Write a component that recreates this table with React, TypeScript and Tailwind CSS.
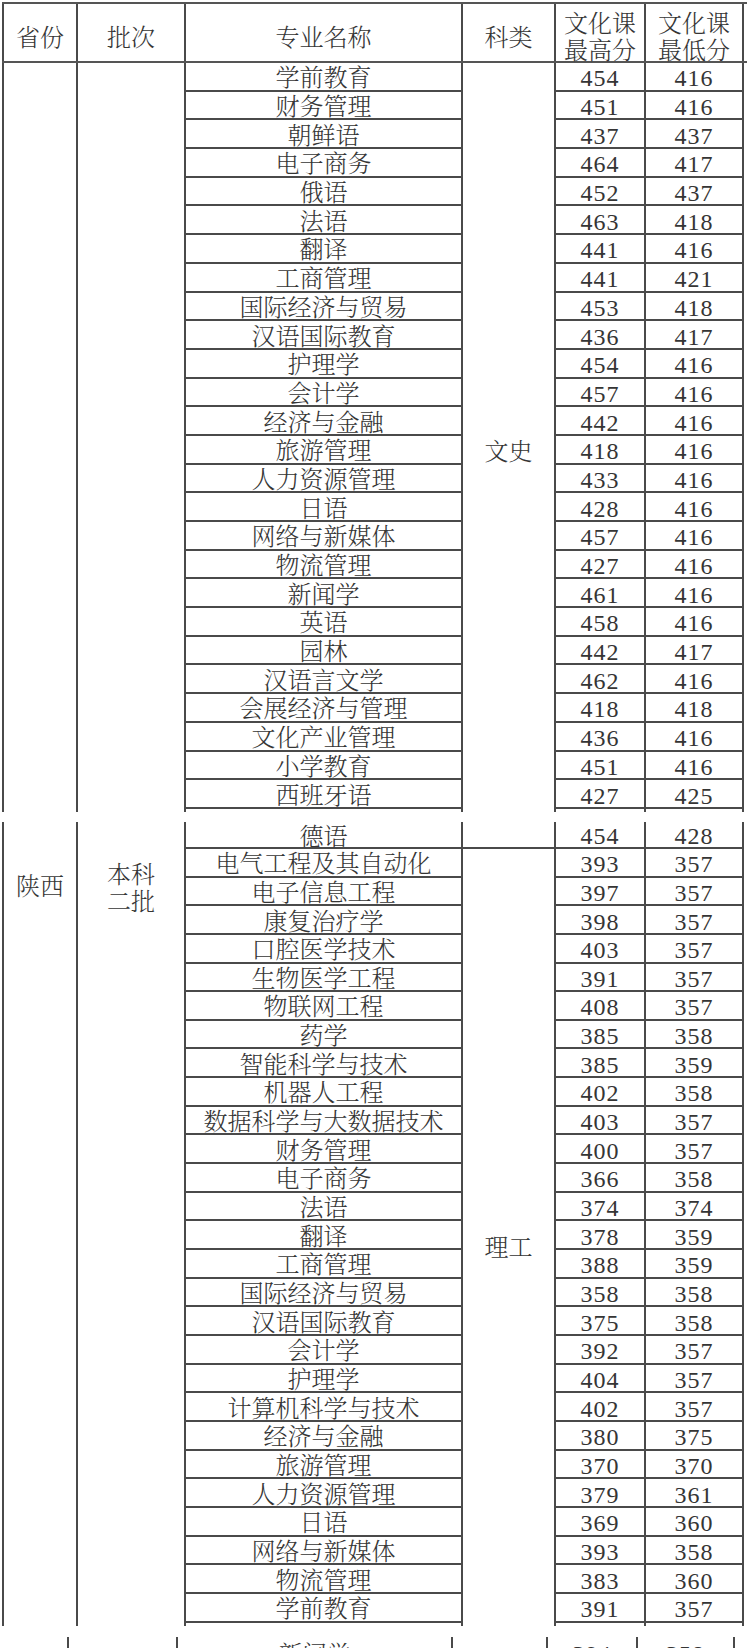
const wenshi: [string, number, number][] = [
  ["学前教育", 454, 416],
  ["财务管理", 451, 416],
  ["朝鲜语", 437, 437],
  ["电子商务", 464, 417],
  ["俄语", 452, 437],
  ["法语", 463, 418],
  ["翻译", 441, 416],
  ["工商管理", 441, 421],
  ["国际经济与贸易", 453, 418],
  ["汉语国际教育", 436, 417],
  ["护理学", 454, 416],
  ["会计学", 457, 416],
  ["经济与金融", 442, 416],
  ["旅游管理", 418, 416],
  ["人力资源管理", 433, 416],
  ["日语", 428, 416],
  ["网络与新媒体", 457, 416],
  ["物流管理", 427, 416],
  ["新闻学", 461, 416],
  ["英语", 458, 416],
  ["园林", 442, 417],
  ["汉语言文学", 462, 416],
  ["会展经济与管理", 418, 418],
  ["文化产业管理", 436, 416],
  ["小学教育", 451, 416],
  ["西班牙语", 427, 425],
];

const ligong: [string, number, number][] = [
  ["电气工程及其自动化", 393, 357],
  ["电子信息工程", 397, 357],
  ["康复治疗学", 398, 357],
  ["口腔医学技术", 403, 357],
  ["生物医学工程", 391, 357],
  ["物联网工程", 408, 357],
  ["药学", 385, 358],
  ["智能科学与技术", 385, 359],
  ["机器人工程", 402, 358],
  ["数据科学与大数据技术", 403, 357],
  ["财务管理", 400, 357],
  ["电子商务", 366, 358],
  ["法语", 374, 374],
  ["翻译", 378, 359],
  ["工商管理", 388, 359],
  ["国际经济与贸易", 358, 358],
  ["汉语国际教育", 375, 358],
  ["会计学", 392, 357],
  ["护理学", 404, 357],
  ["计算机科学与技术", 402, 357],
  ["经济与金融", 380, 375],
  ["旅游管理", 370, 370],
  ["人力资源管理", 379, 361],
  ["日语", 369, 360],
  ["网络与新媒体", 393, 358],
  ["物流管理", 383, 360],
  ["学前教育", 391, 357],
];

const zh = "font-['Noto_Serif_CJK_SC','Noto_Sans_CJK_SC',serif] font-light";
const num = "font-['Liberation_Serif','Times_New_Roman',serif] tracking-[1px]";

function NameCell({ text, tall }: { text: string; tall?: boolean }) {
  return (
    <div
      className={`${tall ? "h-[28.7px]" : "h-[28.67px]"} border-b-2 border-[#4a4a4a] flex items-center justify-center text-[24px] leading-none ${zh}`}
    >
      {text}
    </div>
  );
}

function NumCell({ value, tall, first }: { value: number; tall?: boolean; first?: boolean }) {
  return (
    <div
      className={`${first ? "h-[27px]" : tall ? "h-[28.7px]" : "h-[28.67px]"} border-b-2 border-[#4a4a4a] flex items-center justify-center pt-[4px] text-[24px] leading-none ${num}`}
    >
      {value}
    </div>
  );
}

export default function App() {
  return (
    <div className="w-[747px] h-[1648px] overflow-hidden bg-white text-[#353535] pt-[2px] pl-[2px]">
      {/* header */}
      <div className="flex h-[61px] border-t-2 border-b-2 border-[#555555] text-[24px]">
        <div className={`w-[76px] border-x-2 border-[#4a4a4a] flex items-center justify-center pt-[6px] ${zh}`}>省份</div>
        <div className={`w-[108px] border-r-2 border-[#4a4a4a] flex items-center justify-center pt-[6px] ${zh}`}>批次</div>
        <div className={`w-[277px] border-r-2 border-[#4a4a4a] flex items-center justify-center pt-[6px] ${zh}`}>专业名称</div>
        <div className={`w-[93px] border-r-2 border-[#4a4a4a] flex items-center justify-center pt-[6px] ${zh}`}>科类</div>
        <div className={`w-[90px] border-r-2 border-[#4a4a4a] flex flex-col items-center justify-center pt-[4px] leading-[27px] ${zh}`}>
          <span>文化课</span>
          <span>最高分</span>
        </div>
        <div className={`w-[98px] border-r-2 border-[#4a4a4a] flex flex-col items-center justify-center pt-[4px] leading-[27px] ${zh}`}>
          <span>文化课</span>
          <span>最低分</span>
        </div>
      </div>

      {/* page 1: 文史 */}
      <div className="flex">
        <div className="w-[76px] border-x-2 border-[#4a4a4a]" />
        <div className="w-[108px] border-r-2 border-[#4a4a4a]" />
        <div className="w-[277px] border-r-2 border-[#4a4a4a] flex flex-col pb-[3px]">
          {wenshi.map(([n]) => (
            <NameCell key={n} text={n} tall />
          ))}
        </div>
        <div className={`w-[93px] border-r-2 border-[#4a4a4a] pt-[373px] text-center text-[24px] leading-[28px] ${zh}`}>文史</div>
        <div className="w-[90px] border-r-2 border-[#4a4a4a] flex flex-col pb-[3px]">
          {wenshi.map(([n, hi]) => (
            <NumCell key={n} value={hi} tall />
          ))}
        </div>
        <div className="w-[98px] border-r-2 border-[#4a4a4a] flex flex-col pb-[3px]">
          {wenshi.map(([n, , lo]) => (
            <NumCell key={n} value={lo} tall />
          ))}
        </div>
      </div>

      {/* page 2: 德语 + 理工 */}
      <div className="flex mt-[10px]">
        <div className={`w-[76px] border-x-2 border-[#4a4a4a] pt-[49px] text-center text-[24px] leading-[28px] ${zh}`}>陕西</div>
        <div className={`w-[108px] border-r-2 border-[#4a4a4a] pt-[37px] flex flex-col items-center text-[24px] leading-[27px] ${zh}`}>
          <span>本科</span>
          <span>二批</span>
        </div>
        <div className="w-[277px] border-r-2 border-[#4a4a4a] flex flex-col pb-[3px]">
          <div className={`h-[27px] border-b-2 border-[#4a4a4a] flex items-center justify-center pt-[2px] text-[24px] leading-none ${zh}`}>德语</div>
          {ligong.map(([n]) => (
            <NameCell key={n} text={n} />
          ))}
        </div>
        <div className="w-[93px] border-r-2 border-[#4a4a4a] flex flex-col">
          <div className="h-[27px] border-b-2 border-[#4a4a4a]" />
          <div className={`pt-[383px] text-center text-[24px] leading-[28px] ${zh}`}>理工</div>
        </div>
        <div className="w-[90px] border-r-2 border-[#4a4a4a] flex flex-col pb-[3px]">
          <NumCell value={454} first />
          {ligong.map(([n, hi]) => (
            <NumCell key={n} value={hi} />
          ))}
        </div>
        <div className="w-[98px] border-r-2 border-[#4a4a4a] flex flex-col pb-[3px]">
          <NumCell value={428} first />
          {ligong.map(([n, , lo]) => (
            <NumCell key={n} value={lo} />
          ))}
        </div>
      </div>

      {/* page 3 start */}
      <div className="flex mt-[11px] -ml-[9px] h-[30px] text-[24px]">
        <div className="w-[76px] border-x-2 border-[#4a4a4a]" />
        <div className="w-[109px] border-r-2 border-[#4a4a4a]" />
        <div className={`w-[275px] border-r-2 border-[#4a4a4a] flex items-center justify-center pt-[2px] leading-none ${zh}`}>新闻学</div>
        <div className="w-[95px] border-r-2 border-[#4a4a4a]" />
        <div className={`w-[90px] border-r-2 border-[#4a4a4a] flex items-center justify-center pt-[4px] leading-none ${num}`}>394</div>
        <div className={`w-[97px] border-r-2 border-[#4a4a4a] flex items-center justify-center pt-[4px] leading-none ${num}`}>358</div>
      </div>
    </div>
  );
}
